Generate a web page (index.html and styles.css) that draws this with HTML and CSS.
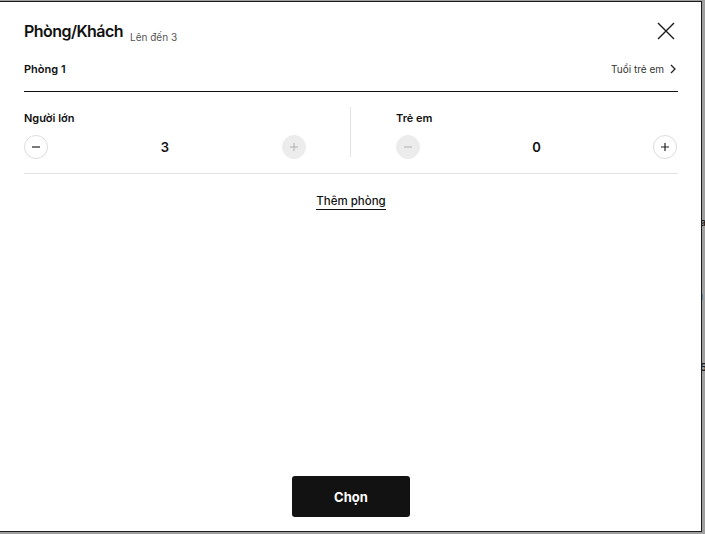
FILE: index.html
```html
<!DOCTYPE html>
<html lang="vi">
<head>
<meta charset="utf-8">
<title>Phòng/Khách</title>
<link rel="stylesheet" href="styles.css">
</head>
<body>
<div class="backdrop">
  <span class="peek peek-1">a</span>
  <span class="peek peek-2">ı</span>
  <span class="peek peek-3">5</span>
</div>
<div class="modal">
  <div class="header">
    <div class="title-wrap"><span class="title">Phòng/Khách</span><span class="subtitle">Lên đến 3</span></div>
    <button class="close" aria-label="Đóng">
      <svg width="18" height="18" viewBox="0 0 18 18"><path d="M1 1 L17 17 M17 1 L1 17" stroke="#1a1a1a" stroke-width="1.4" fill="none"/></svg>
    </button>
  </div>
  <div class="room-head">
    <span class="room-name">Phòng 1</span>
    <span class="child-age">Tuổi trẻ em
      <svg width="8" height="10" viewBox="0 0 8 10"><path d="M2 1 L6 5 L2 9" stroke="#222" stroke-width="1.3" fill="none"/></svg>
    </span>
  </div>
  <div class="counters">
    <div class="counter">
      <div class="label">Người lớn</div>
      <div class="stepper">
        <button class="step">
          <svg width="10" height="10" viewBox="0 0 10 10"><path d="M1 5 H9" stroke="#222" stroke-width="1.2"/></svg>
        </button>
        <span class="value">3</span>
        <button class="step disabled">
          <svg width="10" height="10" viewBox="0 0 10 10"><path d="M1 5 H9 M5 1 V9" stroke="#b0b0b0" stroke-width="1"/></svg>
        </button>
      </div>
    </div>
    <div class="divider"></div>
    <div class="counter">
      <div class="label">Trẻ em</div>
      <div class="stepper">
        <button class="step disabled">
          <svg width="10" height="10" viewBox="0 0 10 10"><path d="M1 5 H9" stroke="#b0b0b0" stroke-width="1"/></svg>
        </button>
        <span class="value">0</span>
        <button class="step">
          <svg width="10" height="10" viewBox="0 0 10 10"><path d="M1 5 H9 M5 1 V9" stroke="#222" stroke-width="1.2"/></svg>
        </button>
      </div>
    </div>
  </div>
  <div class="add-wrap"><a class="add-room" href="#">Thêm phòng</a></div>
  <div class="footer"><button class="choose">Chọn</button></div>
</div>
</body>
</html>
```
FILE: styles.css
```css
* { box-sizing: border-box; }
html, body { margin: 0; padding: 0; }
body {
  background: #9f9f9f;
  font-family: Inter, "Noto Sans", "DejaVu Sans", sans-serif;
  color: #111;
  height: 534px;
  overflow: hidden;
  position: relative;
}
.backdrop { position: absolute; inset: 0; }
.peek { position: absolute; left: 700px; font-size: 11px; color: #222; font-weight: 600; }
.peek-1 { top: 215px; }
.peek-2 { top: 289px; }
.peek-3 { top: 360px; }
.modal {
  position: relative;
  margin: 1px 0 0 -1px;
  width: 703px;
  height: 531px;
  background: #fff;
  border: 1px solid #1c1c1c;
  padding: 19px 23px 14px 24px;
  display: flex;
  flex-direction: column;
}
.header {
  display: flex;
  justify-content: space-between;
  align-items: center;
  height: 20px;
}
.title-wrap { display: flex; align-items: flex-end; white-space: nowrap; }
.title { font-size: 16px; font-weight: 600; letter-spacing: -0.55px; line-height: 20px; }
.subtitle { font-size: 10px; color: #555; line-height: 13px; margin: 0 0 -3px 7px; }
.close {
  border: 0; background: none; padding: 0; width: 18px; height: 18px;
  margin-right: 3px; display: block;
}
.close svg { display: block; }
.room-head {
  margin-top: 18px;
  height: 33px;
  padding-bottom: 13px;
  display: flex;
  justify-content: space-between;
  align-items: center;
  border-bottom: 1px solid #111;
  width: 654px;
}
.room-name { font-size: 11px; font-weight: 600; line-height: 20px; }
.child-age { font-size: 10px; color: #333; display: flex; align-items: center; gap: 5px; line-height: 20px; margin-right: 1px; }
.child-age svg { display: block; }
.counters {
  width: 654px;
  display: grid;
  grid-template-columns: 282px 1px 282px;
  column-gap: 44px;
  padding: 15px 0 14px;
  border-bottom: 1px solid #e2e2e2;
}
.counters .counter:last-child { margin-left: 1px; }
.counter { padding-top: 4px; }
.label { font-size: 11px; font-weight: 600; line-height: 14px; height: 14px; }
.stepper {
  margin-top: 10px;
  display: flex;
  justify-content: space-between;
  align-items: center;
}
.step {
  width: 24px; height: 24px; border-radius: 50%;
  border: 1px solid #dcdcdc; background: #fff; padding: 0;
  display: flex; align-items: center; justify-content: center;
}
.step svg { display: block; }
.step.disabled { background: #ececec; border-color: #ececec; }
.value { font-size: 13px; font-weight: 600; }
.divider { background: #e2e2e2; margin-bottom: 2px; }
.add-wrap { width: 654px; text-align: center; margin-top: 17px; line-height: 16px; }
.add-room {
  font-size: 11.5px; font-weight: 500; color: #111; text-decoration: none;
  border-bottom: 1px solid #111; display: inline-block; line-height: 16px; padding-bottom: 0;
}
.footer { margin-top: auto; width: 654px; display: flex; justify-content: center; }
.choose {
  width: 118px; height: 41px; background: #121212; color: #fff;
  border: 0; border-radius: 3px; font-family: inherit; font-size: 13px; font-weight: 700;
}
```
